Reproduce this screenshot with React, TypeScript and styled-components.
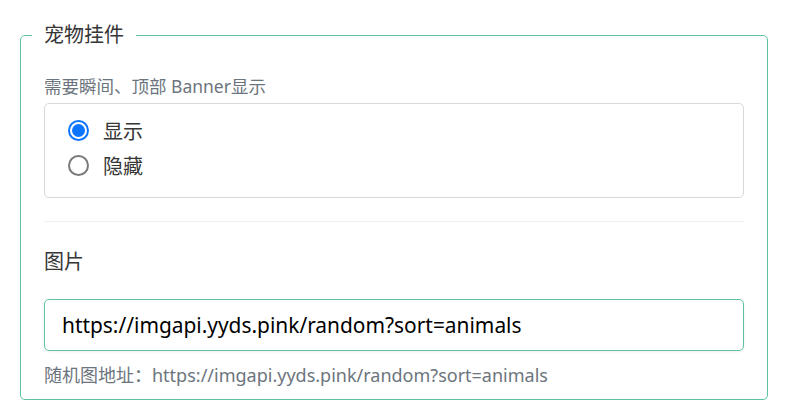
import React, { useState } from "react";
import styled, { createGlobalStyle } from "styled-components";

const GlobalStyle = createGlobalStyle`
  html, body {
    margin: 0;
    padding: 0;
    background: #ffffff;
  }
  body {
    font-family: "Noto Sans", "Noto Sans CJK SC", sans-serif;
    color: #333333;
  }
`;

const Page = styled.div`
  padding: 22px 31px 0 20px;
`;

const Group = styled.fieldset`
  margin: 0;
  padding: 0 0 12px;
  border: 1px solid #5dc49c;
  border-radius: 5px;
  min-width: 0;
`;

const Legend = styled.legend`
  margin-left: 11px;
  padding: 0 12px;
  font-size: 20px;
  line-height: 26px;
  color: #363636;
`;

const Body = styled.div`
  padding: 0 23px;
  display: flex;
  flex-direction: column;
`;

const SubLabel = styled.div`
  margin-top: 26px;
  font-size: 17.5px;
  line-height: 24px;
  color: #6c757d;
`;

const RadioBox = styled.div`
  margin-top: 5px;
  border: 1px solid #d8d8de;
  border-radius: 5px;
  padding: 9px 23px 14px;
  display: flex;
  flex-direction: column;
`;

const RadioRow = styled.label`
  display: flex;
  align-items: center;
  height: 35px;
  font-size: 20px;
  color: #363636;
  cursor: pointer;
`;

const RadioCircle = styled.span<{ $checked: boolean }>`
  box-sizing: border-box;
  width: 21px;
  height: 21px;
  border-radius: 50%;
  margin-right: 14px;
  border: ${(p) => (p.$checked ? "2px solid #0b75ff" : "2px solid #7a7a7a")};
  display: flex;
  align-items: center;
  justify-content: center;
  &::after {
    content: "";
    width: 13px;
    height: 13px;
    border-radius: 50%;
    background: #0b75ff;
    display: ${(p) => (p.$checked ? "block" : "none")};
  }
`;

const Divider = styled.div`
  margin-top: 23px;
  height: 1px;
  background: #f0f0f0;
`;

const FieldLabel = styled.div`
  margin-top: 27px;
  font-size: 20px;
  line-height: 26px;
  color: #363636;
`;

const TextInput = styled.input`
  margin-top: 24px;
  box-sizing: border-box;
  width: 100%;
  height: 52px;
  padding: 0 17px;
  border: 1px solid #5dc49c;
  border-radius: 5px;
  font-family: "Noto Sans", "Noto Sans CJK SC", sans-serif;
  font-size: 20.9px;
  color: #000000;
  outline: none;
  box-shadow: 0 1px 3px rgba(0, 0, 0, 0.06);
`;

const Hint = styled.div`
  margin-top: 12px;
  font-size: 18px;
  line-height: 24px;
  color: #6c757d;
`;

const options = ["显示", "隐藏"];

export default function App() {
  const [choice, setChoice] = useState("显示");
  const [url, setUrl] = useState("https://imgapi.yyds.pink/random?sort=animals");
  return (
    <Page>
      <GlobalStyle />
      <Group>
        <Legend>宠物挂件</Legend>
        <Body>
          <SubLabel>需要瞬间、顶部 Banner显示</SubLabel>
          <RadioBox>
            {options.map((o) => (
              <RadioRow key={o} onClick={() => setChoice(o)}>
                <RadioCircle $checked={choice === o} />
                {o}
              </RadioRow>
            ))}
          </RadioBox>
          <Divider />
          <FieldLabel>图片</FieldLabel>
          <TextInput
            type="text"
            value={url}
            onChange={(e) => setUrl(e.target.value)}
          />
          <Hint>随机图地址：https://imgapi.yyds.pink/random?sort=animals</Hint>
        </Body>
      </Group>
    </Page>
  );
}
